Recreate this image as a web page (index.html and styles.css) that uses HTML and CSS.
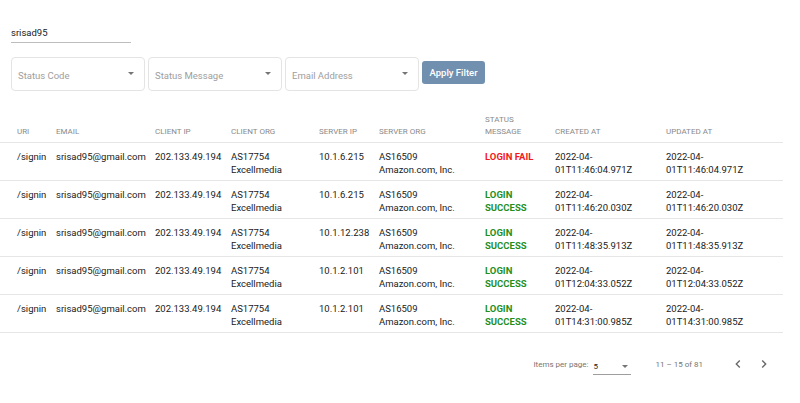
FILE: index.html
```html
<!DOCTYPE html>
<html lang="en">
<head>
    <meta charset="UTF-8">
    <meta name="viewport" content="width=device-width, initial-scale=1.0">
    <title>Login Audit</title>
    <link rel="stylesheet" href="styles.css">
</head>
<body>

<div class="page">
    <!-- Search by user -->
    <div class="search">
        <input type="text" class="search-input" value="srisad95">
    </div>

    <!-- Filters -->
    <div class="filters">
        <div class="select-box"><span class="placeholder">Status Code</span><span class="arrow"></span></div>
        <div class="select-box"><span class="placeholder">Status Message</span><span class="arrow"></span></div>
        <div class="select-box"><span class="placeholder">Email Address</span><span class="arrow"></span></div>
        <button class="apply-btn">Apply Filter</button>
    </div>

    <!-- Results -->
    <table class="results">
        <colgroup>
            <col style="width:56px">
            <col style="width:99px">
            <col style="width:76px">
            <col style="width:88px">
            <col style="width:60px">
            <col style="width:106px">
            <col style="width:70px">
            <col style="width:111px">
            <col style="width:117px">
        </colgroup>
        <thead>
            <tr>
                <th>URI</th>
                <th>Email</th>
                <th>Client IP</th>
                <th>Client Org</th>
                <th>Server IP</th>
                <th>Server Org</th>
                <th>Status Message</th>
                <th>Created At</th>
                <th>Updated At</th>
            </tr>
        </thead>
        <tbody>
            <tr>
                <td>/signin</td>
                <td>srisad95@gmail.com</td>
                <td>202.133.49.194</td>
                <td>AS17754 Excellmedia</td>
                <td>10.1.6.215</td>
                <td class="org">AS16509 Amazon.com, Inc.</td>
                <td class="status fail">LOGIN FAIL</td>
                <td>2022-04-01T11:46:04.971Z</td>
                <td>2022-04-01T11:46:04.971Z</td>
            </tr>
            <tr>
                <td>/signin</td>
                <td>srisad95@gmail.com</td>
                <td>202.133.49.194</td>
                <td>AS17754 Excellmedia</td>
                <td>10.1.6.215</td>
                <td class="org">AS16509 Amazon.com, Inc.</td>
                <td class="status success">LOGIN SUCCESS</td>
                <td>2022-04-01T11:46:20.030Z</td>
                <td>2022-04-01T11:46:20.030Z</td>
            </tr>
            <tr>
                <td>/signin</td>
                <td>srisad95@gmail.com</td>
                <td>202.133.49.194</td>
                <td>AS17754 Excellmedia</td>
                <td>10.1.12.238</td>
                <td class="org">AS16509 Amazon.com, Inc.</td>
                <td class="status success">LOGIN SUCCESS</td>
                <td>2022-04-01T11:48:35.913Z</td>
                <td>2022-04-01T11:48:35.913Z</td>
            </tr>
            <tr>
                <td>/signin</td>
                <td>srisad95@gmail.com</td>
                <td>202.133.49.194</td>
                <td>AS17754 Excellmedia</td>
                <td>10.1.2.101</td>
                <td class="org">AS16509 Amazon.com, Inc.</td>
                <td class="status success">LOGIN SUCCESS</td>
                <td>2022-04-01T12:04:33.052Z</td>
                <td>2022-04-01T12:04:33.052Z</td>
            </tr>
            <tr>
                <td>/signin</td>
                <td>srisad95@gmail.com</td>
                <td>202.133.49.194</td>
                <td>AS17754 Excellmedia</td>
                <td>10.1.2.101</td>
                <td class="org">AS16509 Amazon.com, Inc.</td>
                <td class="status success">LOGIN SUCCESS</td>
                <td>2022-04-01T14:31:00.985Z</td>
                <td>2022-04-01T14:31:00.985Z</td>
            </tr>
        </tbody>
    </table>

    <!-- Paginator -->
    <div class="paginator">
        <span class="page-label">Items per page:</span>
        <div class="page-size"><span>5</span><span class="arrow"></span></div>
        <span class="range">11 &ndash; 15 of 81</span>
        <button class="nav-btn" aria-label="Previous page">
            <svg viewBox="0 0 24 24" width="16" height="16"><path d="M15.41 7.41L14 6l-6 6 6 6 1.41-1.41L10.83 12z"/></svg>
        </button>
        <button class="nav-btn" aria-label="Next page">
            <svg viewBox="0 0 24 24" width="16" height="16"><path d="M10 6L8.59 7.41 13.17 12l-4.58 4.59L10 18l6-6z"/></svg>
        </button>
    </div>
</div>

</body>
</html>
```

FILE: styles.css
```css
body {
    margin: 0;
    font-family: Roboto, "Liberation Sans", sans-serif;
    background-color: #fff;
    color: #212121;
}
.page {
    width: 783px;
}
.search {
    margin: 21px 0 0 11px;
    width: 120px;
    border-bottom: 1px solid #bdbdbd;
}
.search-input {
    border: none;
    outline: none;
    padding: 0 0 3px;
    width: 100%;
    font-family: inherit;
    font-size: 9.5px;
    line-height: 13px;
    color: #212121;
    background: transparent;
}
.filters {
    display: flex;
    align-items: flex-start;
    gap: 3px;
    margin-top: 14px;
    padding-left: 11px;
}
.select-box {
    width: 134px;
    height: 34px;
    box-sizing: border-box;
    border: 1px solid #e4e4e4;
    border-radius: 4px;
    display: flex;
    align-items: center;
    justify-content: space-between;
    padding: 3px 10px 0 6px;
}
.placeholder {
    font-size: 9.5px;
    color: #9e9e9e;
}
.arrow {
    width: 0;
    height: 0;
    border-left: 3.5px solid transparent;
    border-right: 3.5px solid transparent;
    border-top: 3.5px solid #757575;
    margin-top: -4px;
}
.apply-btn {
    margin-top: 4px;
    width: 63px;
    height: 23px;
    border: none;
    border-radius: 3px;
    background-color: #7190b0;
    color: #fff;
    font-family: inherit;
    font-size: 9.5px;
    font-weight: 500;
    padding: 0;
}
.results {
    margin-top: 23px;
    width: 783px;
    border-collapse: collapse;
    table-layout: fixed;
}
.results th {
    font-size: 8px;
    font-weight: 400;
    text-transform: uppercase;
    color: #8a8a8a;
    text-align: left;
    vertical-align: bottom;
    line-height: 12px;
    padding: 0 4px 4px 0;
    height: 18px;
    border-bottom: 1px solid #e6e6e6;
}
.results td {
    font-size: 9.5px;
    line-height: 13px;
    vertical-align: top;
    padding: 7px 4px 4px 0;
    border-bottom: 1px solid #e6e6e6;
}
.results th:first-child,
.results td:first-child {
    padding-left: 17px;
}
.results td.org {
    padding-right: 16px;
}
.status {
    font-weight: 700;
}
.fail {
    color: #f2191c;
}
.success {
    color: #1f8f1f;
}
.paginator {
    display: flex;
    align-items: center;
    justify-content: flex-end;
    height: 38px;
    margin-top: 12px;
    padding-right: 6px;
    font-size: 8px;
    color: #757575;
}
.page-label {
    margin-right: 5px;
}
.page-size {
    width: 38px;
    display: flex;
    justify-content: space-between;
    align-items: center;
    padding: 2px 3px 3px 0;
    box-sizing: border-box;
    border-bottom: 1px solid #9e9e9e;
    color: #212121;
    margin-top: 6px;
}
.page-size .arrow {
    margin-top: 0;
}
.range {
    margin-left: 24px;
    margin-right: 22px;
}
.nav-btn {
    width: 26px;
    height: 26px;
    border: none;
    background: none;
    padding: 0;
    display: flex;
    align-items: center;
    justify-content: center;
}
.nav-btn svg {
    fill: #666;
}
```
